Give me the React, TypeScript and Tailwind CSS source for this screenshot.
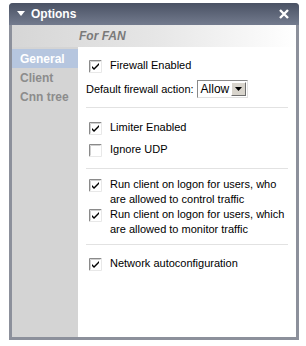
import React from 'react';

const Check: React.FC<{ checked?: boolean }> = ({ checked }) => (
  <svg width="13" height="13" viewBox="0 0 13 13" className="shrink-0">
    <rect x="0" y="0" width="13" height="13" fill="#ffffff" />
    <path d="M0.5 12.5 V0.5 H12.5" stroke="#8a8a8a" fill="none" />
    <path d="M1.5 11.5 V1.5 H11.5" stroke="#d0d0d0" fill="none" />
    <path d="M12.5 0.5 V12.5 H0.5" stroke="#e8e8e8" fill="none" />
    {checked && <path d="M3 6 L5 8 L10 3 L10 5 L5 10 L3 8 Z" fill="#000000" />}
  </svg>
);

const Row: React.FC<{ checked?: boolean; children: React.ReactNode }> = ({ checked, children }) => (
  <div className="flex items-start gap-[8px]">
    <div className="pt-[2px]">
      <Check checked={checked} />
    </div>
    <div className="leading-[15px]">{children}</div>
  </div>
);

const Sep = () => <div className="h-px bg-[#e2e2e2] mr-[8px]" />;

export default function App() {
  return (
    <div className="w-[306px] h-[346px] bg-white pt-[3px] pl-[9px]">
      <div className="w-[290px] h-[337px] flex flex-col rounded-t-[4px] overflow-hidden bg-[#8c909b]">
        {/* Title bar */}
        <div className="h-[22px] flex items-center justify-between px-[8px] bg-gradient-to-b from-[#4a5264] to-[#737b8e] text-white font-bold text-[12px] [font-family:'Liberation_Sans',Arial,sans-serif]">
          <div className="flex items-center gap-[6px]">
            <svg width="8" height="6" viewBox="0 0 8 6">
              <path d="M0 0 H8 L4 5 Z" fill="#ffffff" />
            </svg>
            <span>Options</span>
          </div>
          <svg width="10" height="10" viewBox="0 0 10 10" className="mr-[2px]">
            <path d="M1 1 L9 9 M9 1 L1 9" stroke="#ffffff" strokeWidth="2.4" />
          </svg>
        </div>

        <div className="flex-1 flex flex-col mx-[3px] mb-[3px] bg-white">
          {/* Header */}
          <div className="h-[22px] flex items-center pl-[67px] bg-gradient-to-r from-[#d6d6d6] via-[#e6e6e6] to-white text-[#7a7a7a] italic font-bold text-[12px] [font-family:'Liberation_Sans',Arial,sans-serif]">
            For FAN
          </div>

          <div className="flex-1 flex">
            {/* Sidebar */}
            <div className="w-[66px] bg-[#d4d4d4] pt-[2px] flex flex-col text-[12px] font-bold [font-family:'Liberation_Sans',Arial,sans-serif] text-[#8c8c8c]">
              <div className="h-[19px] flex items-center pl-[8px] bg-[#b6c6df] text-white">General</div>
              <div className="h-[19px] flex items-center pl-[8px]">Client</div>
              <div className="h-[19px] flex items-center pl-[8px]">Cnn tree</div>
            </div>

            {/* Content */}
            <div className="flex-1 pl-[8px] pt-[11px] flex flex-col text-[11px] text-black [font-family:'Liberation_Sans',Arial,sans-serif]">
              <div className="pl-[3px]">
                <Row checked>Firewall Enabled</Row>
              </div>
              <div className="flex items-center mt-[7px] h-[18px]">
                <span className="mr-[3px]">Default firewall action:</span>
                <div className="h-[18px] w-[51px] flex items-center justify-between border border-[#8a8a8a] border-r-[#e0e0e0] border-b-[#e0e0e0] bg-white pl-[3px] pr-[1px]">
                  <span className="text-[12px]">Allow</span>
                  <div className="w-[15px] h-[14px] bg-[#d8d4cc] border border-white border-r-[#6e6e6e] border-b-[#6e6e6e] flex items-center justify-center">
                    <svg width="7" height="4" viewBox="0 0 7 4">
                      <path d="M0 0 H7 L3.5 4 Z" fill="#000000" />
                    </svg>
                  </div>
                </div>
              </div>
              <div className="mt-[9px] mb-[12px]">
                <Sep />
              </div>
              <div className="pl-[3px] flex flex-col gap-[7px]">
                <Row checked>Limiter Enabled</Row>
                <Row>Ignore UDP</Row>
              </div>
              <div className="mt-[11px] mb-[8px]">
                <Sep />
              </div>
              <div className="pl-[3px] flex flex-col">
                <Row checked>
                  Run client on logon for users, who
                  <br />
                  are allowed to control traffic
                </Row>
                <Row checked>
                  Run client on logon for users, which
                  <br />
                  are allowed to monitor traffic
                </Row>
              </div>
              <div className="mt-[7px] mb-[11px]">
                <Sep />
              </div>
              <div className="pl-[3px]">
                <Row checked>Network autoconfiguration</Row>
              </div>
            </div>
          </div>
        </div>
      </div>
    </div>
  );
}
